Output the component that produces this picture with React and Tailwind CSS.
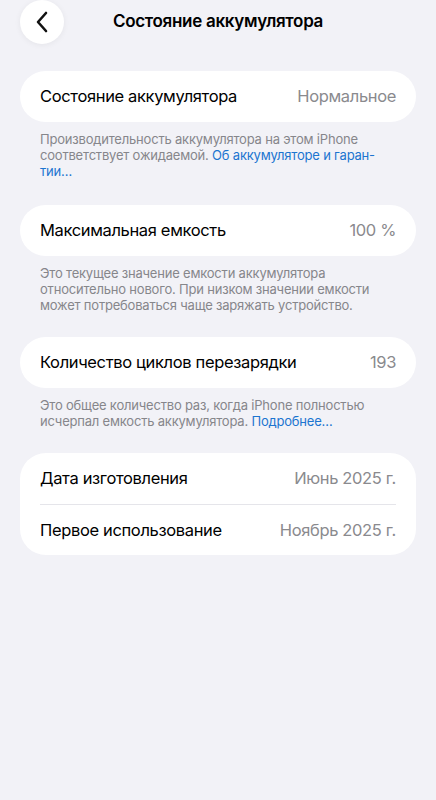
import React from "react";

function Card({ rows }) {
  return (
    <div className="mx-5 rounded-[26px] bg-white px-5">
      {rows.map((r, i) => (
        <div
          key={i}
          className={`flex h-[51px] items-center justify-between ${i > 0 ? "border-t border-[#e5e5ea]" : ""}`}
        >
          <span className="text-[16.5px] tracking-[-0.35px] text-black">{r[0]}</span>
          <span className="text-[16.5px] tracking-[-0.35px] text-[#8a8a8e]">{r[1]}</span>
        </div>
      ))}
    </div>
  );
}

function Footer({ children }) {
  return (
    <p className="mx-10 mt-[9px] text-[13px] leading-[16px] text-[#86868b] tracking-[-0.2px]">
      {children}
    </p>
  );
}

export default function App() {
  return (
    <div
      className="min-h-[800px] w-[436px] bg-[#f2f2f7]"
      style={{ fontFamily: "Inter, 'Noto Sans', sans-serif" }}
    >
      <div className="relative flex h-[44px] items-center justify-center">
        <div className="absolute left-5 top-0 flex h-[44px] w-[44px] items-center justify-center rounded-full bg-white shadow-[0_1px_6px_rgba(0,0,0,0.06)]">
          <svg width="14" height="22" viewBox="0 0 14 22" fill="none">
            <path d="M11 2L3 11L11 20" stroke="#111" strokeWidth="2.6" strokeLinecap="round" strokeLinejoin="round" />
          </svg>
        </div>
        <h1 className="text-[17px] font-semibold tracking-[-0.3px] text-black">Состояние аккумулятора</h1>
      </div>

      <div className="pt-[27px]">
        <Card rows={[["Состояние аккумулятора", "Нормальное"]]} />
        <Footer>
          Производительность аккумулятора на этом iPhone соответствует ожидаемой.{" "}
          <span className="text-[#1c75d0]">Об аккумуляторе и гаран-<br />тии…</span>
        </Footer>

        <div className="mt-[26px]">
          <Card rows={[["Максимальная емкость", "100 %"]]} />
        </div>
        <Footer>
          Это текущее значение емкости аккумулятора относительно нового. При низком значении емкости может потребоваться чаще заряжать устройство.
        </Footer>

        <div className="mt-[24px]">
          <Card rows={[["Количество циклов перезарядки", "193"]]} />
        </div>
        <Footer>
          Это общее количество раз, когда iPhone полностью исчерпал емкость аккумулятора.{" "}
          <span className="text-[#1c75d0]">Подробнее…</span>
        </Footer>

        <div className="mt-[24px]">
          <Card
            rows={[
              ["Дата изготовления", "Июнь 2025 г."],
              ["Первое использование", "Ноябрь 2025 г."],
            ]}
          />
        </div>
      </div>
    </div>
  );
}
